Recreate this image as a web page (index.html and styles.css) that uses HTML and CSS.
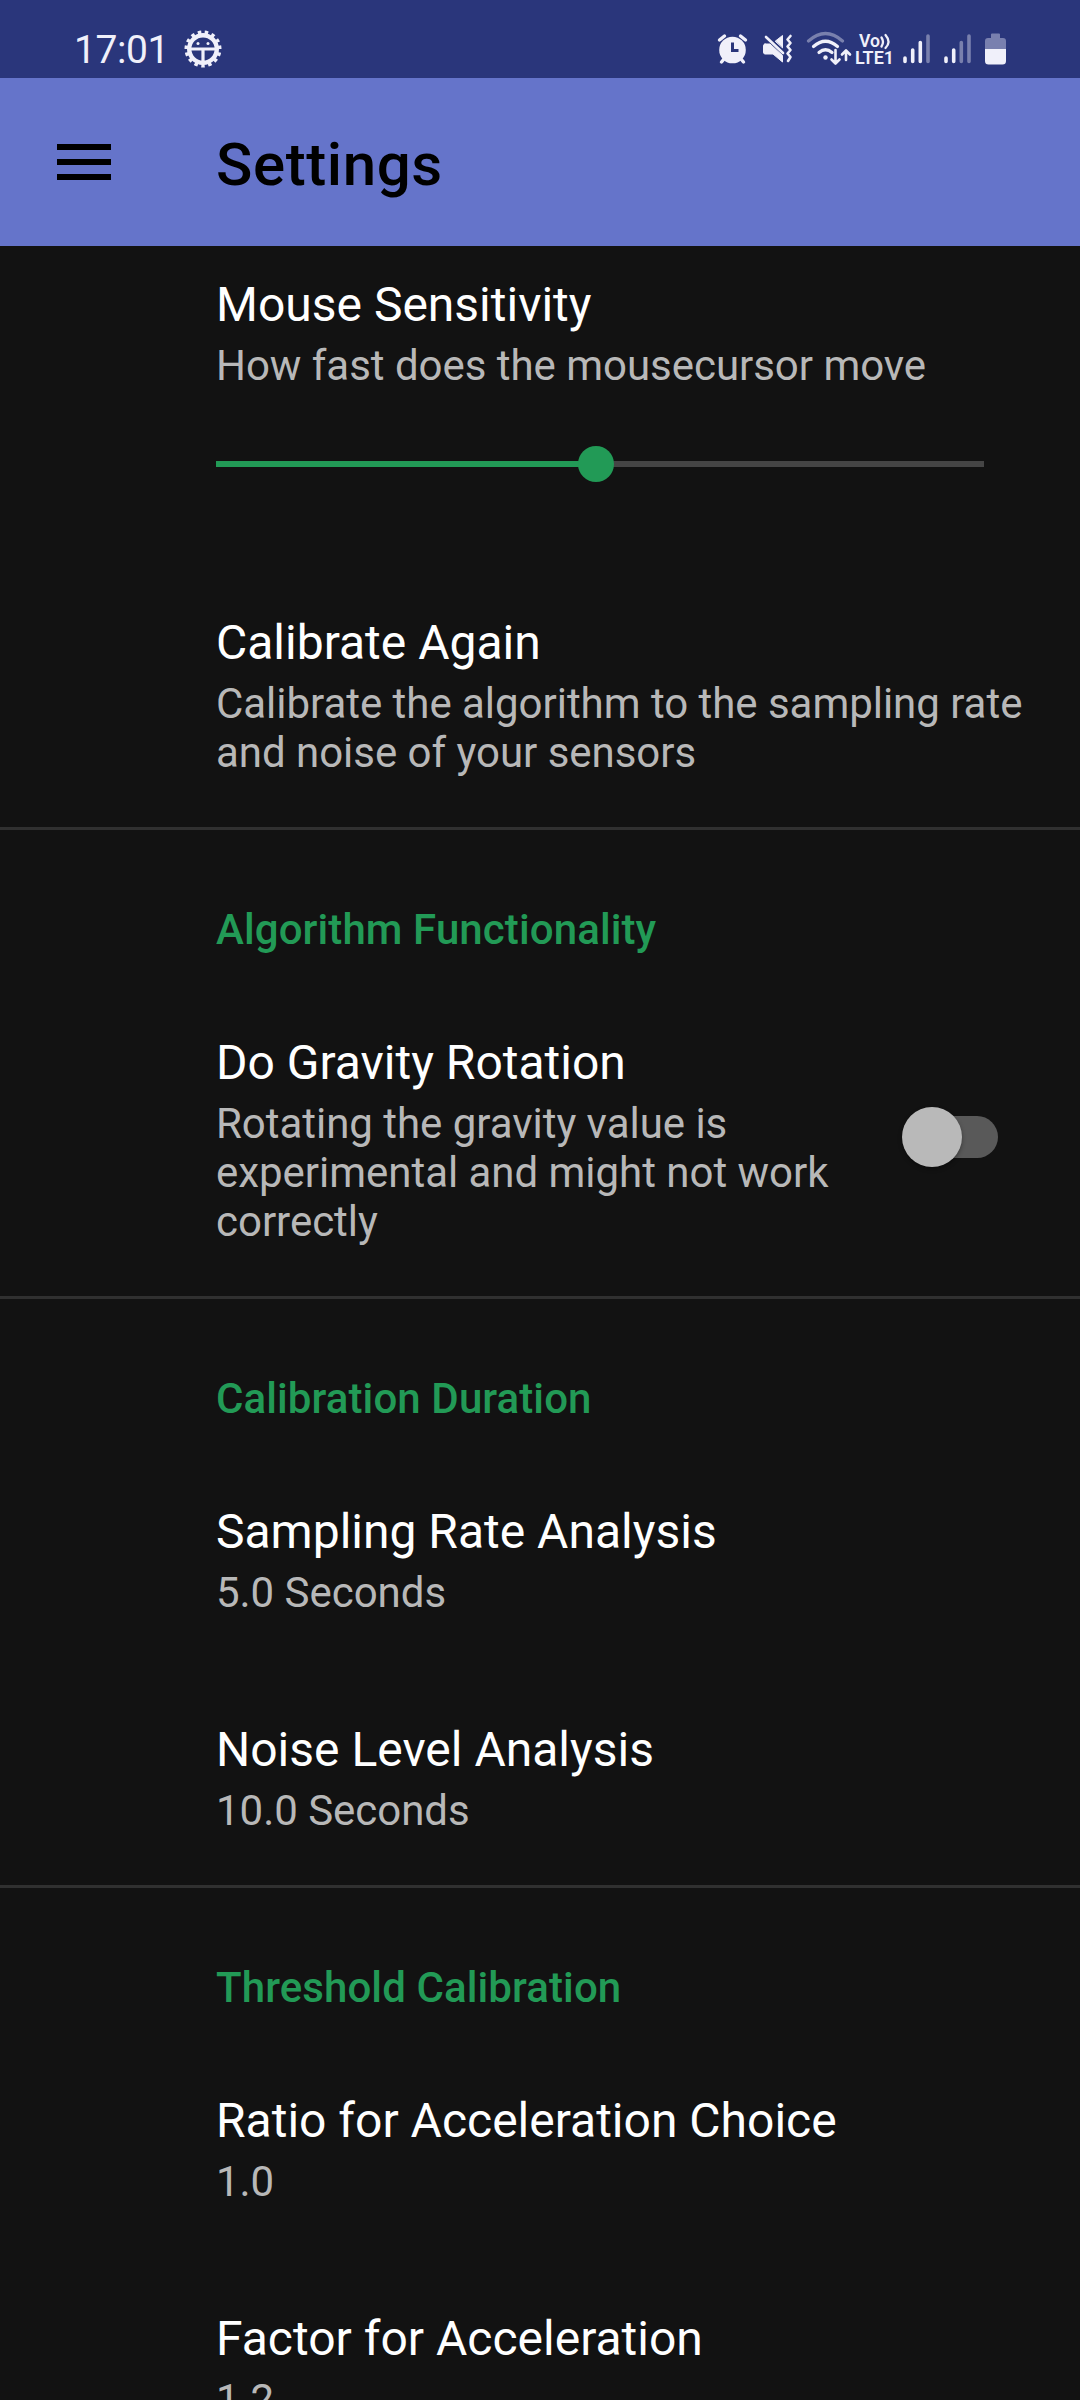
FILE: index.html
```html
<!DOCTYPE html>
<html lang="en">
<head>
<meta charset="utf-8">
<title>Settings</title>
<link rel="stylesheet" href="styles.css">
</head>
<body>
<div class="screen">
  <div class="status-bar">
    <span class="clock">17:01</span>
    <svg class="gear" width="40" height="40" viewBox="-20 -20 40 40" fill="none" stroke="currentColor">
      <circle r="13.8" stroke-width="4.4"/>
      <circle r="16.6" stroke-width="3.8" pathLength="150" stroke-dasharray="5 5" stroke-dashoffset="5"/>
      <path d="M-12 0H12M0 0V13" stroke-width="3.2"/>
      <circle cx="-5" cy="-5.5" r="1.5" fill="currentColor" stroke="none"/>
      <circle cx="5" cy="-5.5" r="1.5" fill="currentColor" stroke="none"/>
    </svg>
    <svg class="indicators" width="300" height="40" viewBox="710 29 300 40" fill="none" stroke="currentColor" stroke-linecap="round" stroke-linejoin="round">
      <g>
        <circle cx="732.5" cy="50" r="13.3" fill="currentColor" stroke="none"/>
        <path d="M719.5 40L724.5 36M745.5 40L740.5 36M724 59L721.5 62M741 59L743.5 62" stroke-width="3.4"/>
        <path class="cut" d="M732.5 42.5V50.5H738.5" stroke-width="3" stroke-linecap="butt" stroke-linejoin="miter"/>
      </g>
      <g>
        <path d="M765 44H770L782.5 55.5V62L773 54H765Q763.5 54 763.5 52V46Q763.5 44 765 44Z" fill="currentColor" stroke-width="1"/>
        <path d="M775.5 41L782.5 35.5V47.5Z" fill="currentColor" stroke-width="1"/>
        <path d="M766 37L783 53" stroke-width="2.6"/>
        <path d="M790.5 36L787.5 39.5L790.5 43L787.5 46.5L790.5 50L787.5 53.5L790.5 57L788 61" stroke-width="2.6"/>
      </g>
      <g stroke-width="3.2">
        <path class="dim" d="M808.5 41Q825.5 26 842.5 41"/>
        <path d="M813.5 46.5Q825.5 36 837.5 46.5"/>
        <path d="M819 52.5Q825.5 47 832 52.5"/>
        <circle cx="825.5" cy="57.5" r="2.2" fill="currentColor" stroke="none"/>
        <path d="M835.5 50V63M831.5 59.5L835.5 63.5L839.5 59.5M846 60V51M842 54.5L846 50.5L850 54.5" stroke-width="2.6"/>
      </g>
      <g class="carrier" stroke="none" fill="currentColor">
        <text x="859" y="46.5" textLength="21" lengthAdjust="spacingAndGlyphs">Vo</text>
        <text x="855" y="64" textLength="39" lengthAdjust="spacingAndGlyphs">LTE1</text>
      </g>
      <path d="M881.5 37.5Q884.5 42 881.5 46.5M885.5 35Q891.5 42 885.500 48" stroke-width="2.300"/>
      <g stroke-width="3.600">
        <path d="M905 58V61.500M912.700 50V61.500M920.300 42.500V61.500M946 58V61.500M953.700 50V61.500"/>
        <path class="dim" d="M928 36V61.500M961.300 42.500V61.500M969 36V61.500"/>
      </g>
      <g stroke="none">
        <path class="cell" d="M985 49V41Q985 38 988 38H991V34.500Q991 33.500 992 33.500H999Q1000 33.500 1000 34.500V38H1003Q1006 38 1006 41V49Z"/>
        <path d="M985 49H1006V61Q1006 64.500 1002.500 64.500H988.500Q985 64.500 985 61Z" fill="currentColor"/>
      </g>
    </svg>
  </div>

  <header class="app-bar">
    <svg class="menu-icon" width="54" height="36" viewBox="0 0 54 36"><path d="M0 0H54V6H0ZM0 15H54V21H0ZM0 30H54V36H0Z"/></svg>
    <h1 class="app-title">Settings</h1>
  </header>

  <main class="preferences">
    <section class="pref pref-slider">
      <div class="title">Mouse Sensitivity</div>
      <div class="summary">How fast does the mousecursor move</div>
      <div class="slider"><div class="slider-fill" style="width: 380px"></div><div class="slider-thumb"></div></div>
    </section>
    <section class="pref">
      <div class="title">Calibrate Again</div>
      <div class="summary">Calibrate the algorithm to the sampling rate<br>and noise of your sensors</div>
    </section>

    <h2 class="category">Algorithm Functionality</h2>
    <section class="pref pref-switch">
      <div class="text">
        <div class="title">Do Gravity Rotation</div>
        <div class="summary">Rotating the gravity value is<br>experimental and might not work<br>correctly</div>
      </div>
      <div class="switch"><div class="switch-thumb"></div></div>
    </section>

    <h2 class="category">Calibration Duration</h2>
    <section class="pref">
      <div class="title">Sampling Rate Analysis</div>
      <div class="summary">5.0 Seconds</div>
    </section>
    <section class="pref">
      <div class="title">Noise Level Analysis</div>
      <div class="summary">10.0 Seconds</div>
    </section>

    <h2 class="category">Threshold Calibration</h2>
    <section class="pref">
      <div class="title">Ratio for Acceleration Choice</div>
      <div class="summary">1.0</div>
    </section>
    <section class="pref">
      <div class="title">Factor for Acceleration</div>
      <div class="summary">1.2</div>
    </section>
  </main>
</div>
</body>
</html>
```
FILE: styles.css
```css
* { box-sizing: border-box; }

body {
  margin: 0;
  background: #121212;
  font-family: Roboto, sans-serif;
}

.screen {
  display: flex;
  flex-direction: column;
  width: 1080px;
  height: 2400px;
  overflow: hidden;
  background: #121212;
}

.status-bar {
  display: flex;
  flex: none;
  height: 78px;
  padding: 29px 70px 0 74px;
  background: #2a367b;
  color: #f0f0fa;
}

.clock {
  width: 109px;
  padding-top: 1px;
  font-size: 39px;
  line-height: 40px;
  letter-spacing: -0.4px;
  white-space: nowrap;
}

.indicators { margin-left: auto; }
.dim { opacity: 0.4; }
.cut { stroke: #2a367b; }
.cell { fill: #7980af; }
.carrier { font-size: 18px; font-weight: 600; }

.app-bar {
  display: flex;
  flex: none;
  align-items: center;
  height: 168px;
  padding-left: 57px;
  background: #6574ca;
  color: #000;
}

.menu-icon { margin-right: 105px; }

.app-title {
  margin: 0;
  padding-top: 5px;
  font-size: 60px;
  font-weight: 500;
  line-height: 70px;
  letter-spacing: 0.6px;
}

.preferences { flex: none; }

.pref { padding: 54px 48px 50px 216px; }

.pref-slider { padding: 30px 96px 78px 216px; }

.title {
  margin-bottom: 8px;
  color: #fff;
  font-size: 48px;
  line-height: 57px;
  white-space: nowrap;
}

.summary {
  color: #b8b8b8;
  font-size: 42px;
  line-height: 49px;
  letter-spacing: -0.03px;
  white-space: nowrap;
}

.category {
  margin: 0;
  padding: 75px 48px 26px 216px;
  border-top: 3px solid #303030;
  color: #229a56;
  font-size: 42px;
  font-weight: 500;
  line-height: 49px;
  letter-spacing: 0.1px;
}

.slider {
  display: flex;
  align-items: center;
  height: 36px;
  margin-top: 56px;
  background: linear-gradient(#454545, #454545) center / 100% 6px no-repeat;
}

.slider-fill {
  height: 6px;
  background: #229a56;
}

.slider-thumb {
  width: 36px;
  height: 36px;
  margin-left: -18px;
  border-radius: 50%;
  background: #229a56;
}

.pref-switch {
  display: flex;
  align-items: center;
  justify-content: space-between;
  padding-right: 82px;
}

.switch {
  display: flex;
  align-items: center;
  width: 96px;
  height: 42px;
  margin-bottom: 6px;
  border-radius: 21px;
  background: linear-gradient(90deg, transparent 30px, #595959 30px);
}

.switch-thumb {
  width: 60px;
  height: 60px;
  border-radius: 50%;
  background: #b9b9b9;
  box-shadow: 0 2px 4px rgba(0, 0, 0, 0.35);
}
```
